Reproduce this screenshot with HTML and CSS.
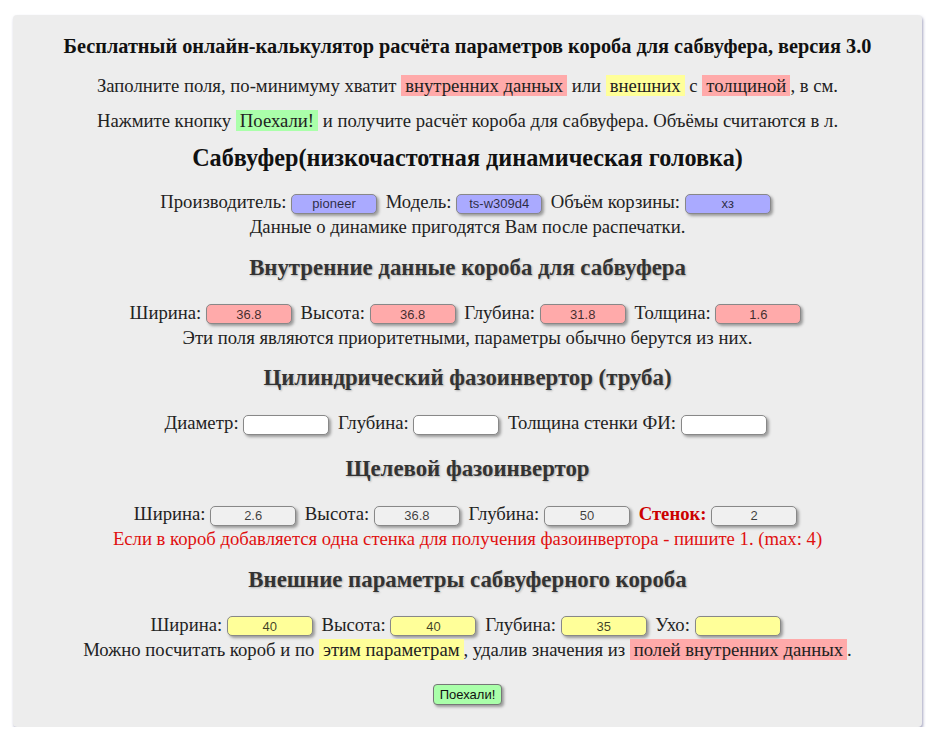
FILE: index.html
```html
<!DOCTYPE html>
<html lang="ru">
<head>
    <meta charset="UTF-8">
    <title>Калькулятор короба для сабвуфера</title>
    <link rel="stylesheet" href="styles.css">
</head>
<body>
    <div class="card">
        <h1>Бесплатный онлайн-калькулятор расчёта параметров короба для сабвуфера, версия 3.0</h1>
        <p class="intro first">Заполните поля, по-минимуму хватит <span class="mark red">внутренних данных</span> или <span class="mark yellow">внешних</span> с <span class="mark red">толщиной</span>, в см.</p>
        <p class="intro">Нажмите кнопку <span class="mark green">Поехали!</span> и получите расчёт короба для сабвуфера. Объёмы считаются в л.</p>

        <h2>Сабвуфер(низкочастотная динамическая головка)</h2>
        <div class="row">
            Производитель: <input class="field blue" type="text" value="pioneer">
            Модель: <input class="field blue" type="text" value="ts-w309d4">
            Объём корзины: <input class="field blue" type="text" value="хз">
        </div>
        <div class="note">Данные о динамике пригодятся Вам после распечатки.</div>

        <h3>Внутренние данные короба для сабвуфера</h3>
        <div class="row">
            Ширина: <input class="field red" type="text" value="36.8">
            Высота: <input class="field red" type="text" value="36.8">
            Глубина: <input class="field red" type="text" value="31.8">
            Толщина: <input class="field red" type="text" value="1.6">
        </div>
        <div class="note">Эти поля являются приоритетными, параметры обычно берутся из них.</div>

        <h3>Цилиндрический фазоинвертор (труба)</h3>
        <div class="row">
            Диаметр: <input class="field white" type="text" value="">
            Глубина: <input class="field white" type="text" value="">
            Толщина стенки ФИ: <input class="field white" type="text" value="">
        </div>

        <h3 class="wide">Щелевой фазоинвертор</h3>
        <div class="row">
            Ширина: <input class="field grey" type="text" value="2.6">
            Высота: <input class="field grey" type="text" value="36.8">
            Глубина: <input class="field grey" type="text" value="50">
            <b class="warn">Стенок:</b> <input class="field grey" type="text" value="2">
        </div>
        <div class="note warn">Если в короб добавляется одна стенка для получения фазоинвертора - пишите 1. (max: 4)</div>

        <h3>Внешние параметры сабвуферного короба</h3>
        <div class="row">
            Ширина: <input class="field yellow" type="text" value="40">
            Высота: <input class="field yellow" type="text" value="40">
            Глубина: <input class="field yellow" type="text" value="35">
            Ухо: <input class="field yellow" type="text" value="">
        </div>
        <div class="note">Можно посчитать короб и по <span class="mark yellow">этим параметрам</span>, удалив значения из <span class="mark red">полей внутренних данных</span>.</div>

        <button class="go" type="button">Поехали!</button>
    </div>
</body>
</html>
```

FILE: styles.css
```css
* {
    box-sizing: border-box;
}

body {
    margin: 0;
    background: #fff;
    color: #222;
    font-family: 'Liberation Serif', 'DejaVu Serif', serif;
    font-size: 18.7px;
}

.card {
    margin: 15px 18px 0 13px;
    padding: 19px 0 24px;
    height: 712px;
    background: #ededed;
    border-radius: 4px;
    box-shadow: 1px 2px 3px rgba(90, 90, 140, 0.55);
    text-align: center;
}

h1 {
    margin: 0;
    font-size: 20.3px;
    line-height: 24px;
    color: #111;
}

.intro {
    margin: 15px 0 0;
    line-height: 20px;
}

.intro.first {
    margin-top: 18px;
}

.mark {
    padding: 0 4px;
}

.mark.red {
    background: #ffaaaa;
}

.mark.yellow {
    background: #ffff99;
}

.mark.green {
    background: #aaffaa;
}

h2 {
    margin: 13px 0 17px;
    font-size: 24.2px;
    line-height: 28px;
    color: #111;
}

h3 {
    margin: 15.5px 0 19px;
    font-size: 22.8px;
    line-height: 26px;
    color: #333;
    text-shadow: 1px 1px 2px rgba(0, 0, 0, 0.25);
}

h3.wide {
    margin-top: 21px;
}

.row,
.note {
    line-height: 25px;
}

.field {
    width: 86px;
    height: 20px;
    margin-right: 4px;
    padding: 0 4px;
    vertical-align: middle;
    border: 1px solid #888;
    border-radius: 5px;
    box-shadow: 2px 2px 3px rgba(0, 0, 0, 0.35);
    font-family: 'Liberation Sans', Arial, sans-serif;
    font-size: 13px;
    text-align: center;
    color: rgba(0, 0, 0, 0.75);
    outline: none;
}

.field.blue {
    background: #aaaaff;
}

.field.red {
    background: #ffaaaa;
}

.field.white {
    background: #fff;
}

.field.grey {
    background: #f0f0f0;
}

.field.yellow {
    background: #ffff99;
}

.warn {
    color: #e01010;
}

b.warn {
    color: #cc0000;
}

.go {
    margin-top: 22px;
    padding: 2px 6px;
    height: 21px;
    background: #aaffaa;
    border: 1px solid #777;
    border-radius: 4px;
    box-shadow: 2px 2px 3px rgba(0, 0, 0, 0.35);
    font-family: 'Liberation Sans', Arial, sans-serif;
    font-size: 13px;
    color: #111;
    cursor: pointer;
}
```
